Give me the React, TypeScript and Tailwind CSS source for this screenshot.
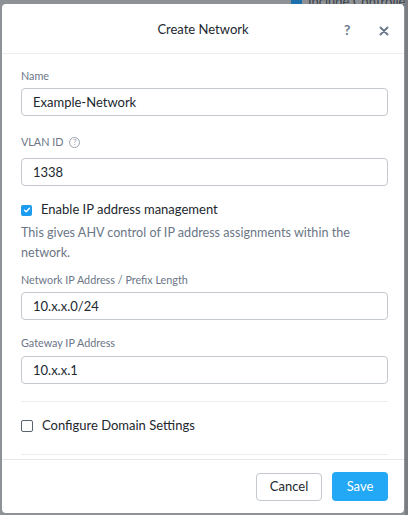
import React, { useState } from 'react';

const font = { fontFamily: 'Lato, "Open Sans", Arial, sans-serif' };

const Field = ({
  label,
  value,
  help,
  gap = 'mb-[5px]',
}: {
  label: string;
  value: string;
  help?: boolean;
  gap?: string;
}) => (
  <div className="flex flex-col">
    <label className={`flex items-center gap-1.5 text-[10.8px] text-[#6b7686] h-[14px] ${gap}`}>
      {label}
      {help && (
        <span className="w-[11px] h-[11px] rounded-full border border-[#9aa3ae] text-[8px] leading-none flex items-center justify-center text-[#9aa3ae]">
          ?
        </span>
      )}
    </label>
    <input
      defaultValue={value}
      className="h-[28px] w-full rounded-[4px] border border-[#c4c9d0] bg-white px-[11px] text-[13px] text-[#22272e] outline-none"
    />
  </div>
);

export default function App() {
  const [ipam, setIpam] = useState(true);
  const [domain, setDomain] = useState(false);

  return (
    <div className="relative w-[408px] h-[515px] bg-[#8e9297] overflow-hidden" style={font}>
      {/* content behind the overlay */}
      <div className="absolute top-[-8px] left-[291px] flex items-center gap-[6px] text-[13px] text-[#3b4148] whitespace-nowrap">
        <span className="w-[11px] h-[11px] rounded-[2px] bg-[#1f6fad]" />
        <span>Include Controller</span>
      </div>
      <div className="absolute top-0 right-0 w-[3px] h-full bg-[#7a7e83]" />

      <div className="absolute left-[2px] top-[4px] w-[402px] h-[509px] bg-white rounded-[4px] flex flex-col">
        {/* Header */}
        <div className="h-[50px] flex items-center justify-center relative border-b border-[#eceef1] shrink-0">
          <h3 className="text-[13px] text-[#22272e] mt-[2px]">Create Network</h3>
          <span className="absolute left-[342px] top-[15px] text-[14px] font-bold text-[#6b7a8c]">?</span>
          <svg className="absolute left-[377px] top-[22px]" width="10" height="10" viewBox="0 0 10 10">
            <path d="M1.5 1.5 L8.5 8.5 M8.5 1.5 L1.5 8.5" stroke="#6b7a8c" strokeWidth="2" strokeLinecap="round" />
          </svg>
        </div>

        {/* Content */}
        <div className="flex-1 pl-[19px] pr-[16px] pt-[15px] flex flex-col">
          <Field label="Name" value="Example-Network" />
          <div className="h-[19px]" />
          <Field label="VLAN ID" value="1338" help gap="mb-[9px]" />

          <label className="flex items-center gap-[9px] mt-[14px] h-[20px] cursor-pointer" onClick={() => setIpam(!ipam)}>
            <span className={`w-[11px] h-[11px] rounded-[2px] flex items-center justify-center ${ipam ? 'bg-[#1b9cf0]' : 'border border-[#6b7686]'}`}>
              {ipam && (
                <svg width="8" height="8" viewBox="0 0 8 8">
                  <path d="M1.5 4.2 L3.2 5.8 L6.5 2.2" stroke="white" strokeWidth="1.4" fill="none" strokeLinecap="round" strokeLinejoin="round" />
                </svg>
              )}
            </span>
            <span className="text-[13px] text-[#22272e]">Enable IP address management</span>
          </label>
          <p className="text-[12.6px] leading-[20px] text-[#6b7686] mt-[3px]">
            This gives AHV control of IP address assignments within the network.
          </p>

          <div className="h-[10px]" />
          <Field label="Network IP Address / Prefix Length" value="10.x.x.0/24" />
          <div className="h-[16px]" />
          <Field label="Gateway IP Address" value="10.x.x.1" gap="mb-[6px]" />

          <div className="border-t border-[#eceef1] mt-[17px]" />
          <label className="flex items-center gap-[9px] h-[47px] cursor-pointer" onClick={() => setDomain(!domain)}>
            <span className={`w-[12px] h-[12px] rounded-[2px] flex items-center justify-center ${domain ? 'bg-[#1b9cf0]' : 'border border-[#5a6370]'}`} />
            <span className="text-[13px] text-[#22272e]">Configure Domain Settings</span>
          </label>
          <div className="border-t border-[#eceef1] mt-[5px]" />
        </div>

        {/* Footer */}
        <div className="h-[54px] border-t border-[#e4e7eb] flex items-center justify-end gap-[10px] px-[16px] shrink-0">
          <button className="h-[28px] w-[66px] rounded-[4px] border border-[#c4c9d0] text-[13px] text-[#22272e] bg-white">
            Cancel
          </button>
          <button className="h-[29px] w-[56px] rounded-[4px] bg-[#22a8f5] text-[13px] text-white">
            Save
          </button>
        </div>
      </div>
    </div>
  );
}
